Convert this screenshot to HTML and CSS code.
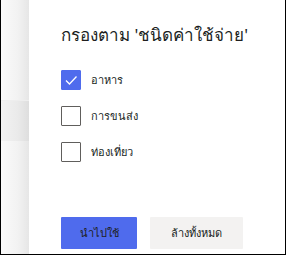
FILE: index.html
```html
<!DOCTYPE html>
<html lang="th">
<head>
    <meta charset="UTF-8">
    <title>กรองตาม</title>
    <link rel="stylesheet" href="styles.css">
</head>
<body>
    <div class="frame">
        <div class="backdrop">
            <div class="backdrop-row"></div>
        </div>
        <div class="panel">
            <h2 class="title">กรองตาม 'ชนิดค่าใช้จ่าย'</h2>
            <div class="options">
                <label class="option">
                    <span class="box checked">
                        <svg width="14" height="14" viewBox="0 0 14 14"><path d="M2 7.5 L5.5 11 L12.5 3.5" fill="none" stroke="#fff" stroke-width="1.3"/></svg>
                    </span>
                    <span class="option-text">อาหาร</span>
                </label>
                <label class="option">
                    <span class="box"></span>
                    <span class="option-text">การขนส่ง</span>
                </label>
                <label class="option">
                    <span class="box"></span>
                    <span class="option-text">ท่องเที่ยว</span>
                </label>
            </div>
            <div class="actions">
                <button class="btn primary">นำไปใช้</button>
                <button class="btn secondary">ล้างทั้งหมด</button>
            </div>
        </div>
    </div>
</body>
</html>
```
FILE: styles.css
```css
body {
    margin: 0;
    font-family: "Segoe UI", Tahoma, "Noto Sans", "DejaVu Sans", sans-serif;
    color: #201f1e;
}
.frame {
    width: 284px;
    height: 254px;
    display: flex;
    border-left: 1px solid #000;
    border-right: 1px solid #000;
    border-bottom: 1px solid #000;
    background: #fff;
}
.backdrop {
    width: 28px;
    flex: none;
    background: linear-gradient(to right, #fafafa, #f2f2f2 60%, #e6e6e6);
    padding-top: 100px;
    box-sizing: border-box;
}
.backdrop-row {
    height: 40px;
    background: rgba(0, 0, 0, 0.03);
    border-top: 1px solid #eee;
}
.panel {
    flex: 1;
    padding: 21px 0 0 32px;
    display: flex;
    flex-direction: column;
}
.title {
    margin: 0;
    font-size: 17px;
    font-weight: normal;
    line-height: 28px;
}
.options {
    margin-top: 21px;
    display: flex;
    flex-direction: column;
    gap: 16px;
}
.option {
    display: flex;
    align-items: center;
    gap: 10px;
    font-size: 11px;
}
.box {
    width: 18px;
    height: 18px;
    border: 1px solid #605e5c;
    border-radius: 1px;
    display: flex;
    align-items: center;
    justify-content: center;
}
.box.checked {
    background: #4f6bed;
    border-color: #4f6bed;
}
.actions {
    margin-top: 55px;
    display: flex;
    gap: 13px;
}
.btn {
    height: 32px;
    border: none;
    border-radius: 1px;
    font-family: inherit;
    font-size: 11px;
    color: #201f1e;
}
.primary {
    width: 76px;
    background: #4f6bed;
}
.secondary {
    width: 93px;
    background: #f3f2f1;
}
```
